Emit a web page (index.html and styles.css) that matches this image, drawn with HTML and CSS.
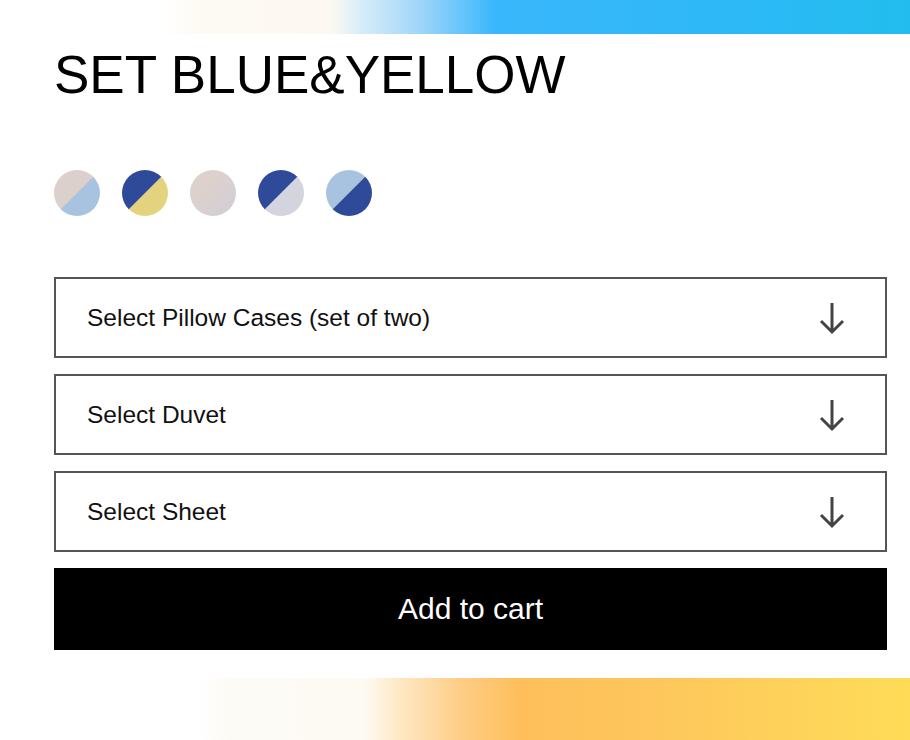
FILE: index.html
```html
<!DOCTYPE html>
<html lang="en">
<head>
<meta charset="utf-8">
<title>Set Blue&amp;Yellow</title>
<link rel="stylesheet" href="styles.css">
</head>
<body>
<div class="band band-top"></div>
<main class="product">
  <h1 class="title">SET BLUE&amp;YELLOW</h1>
  <div class="swatches">
    <span class="swatch sw1"></span>
    <span class="swatch sw2"></span>
    <span class="swatch sw3"></span>
    <span class="swatch sw4"></span>
    <span class="swatch sw5"></span>
  </div>
  <div class="selects">
    <div class="select"><span>Select Pillow Cases (set of two)</span>
      <svg class="arrow" viewBox="0 0 28 34" width="28" height="34"><path d="M14 2V31M3 20L14 31L25 20" fill="none" stroke="#444" stroke-width="3"/></svg>
    </div>
    <div class="select"><span>Select Duvet</span>
      <svg class="arrow" viewBox="0 0 28 34" width="28" height="34"><path d="M14 2V31M3 20L14 31L25 20" fill="none" stroke="#444" stroke-width="3"/></svg>
    </div>
    <div class="select"><span>Select Sheet</span>
      <svg class="arrow" viewBox="0 0 28 34" width="28" height="34"><path d="M14 2V31M3 20L14 31L25 20" fill="none" stroke="#444" stroke-width="3"/></svg>
    </div>
    <button class="cart">Add to cart</button>
  </div>
</main>
<div class="band band-bottom"></div>
</body>
</html>
```
FILE: styles.css
```css
html, body {
  margin: 0;
  padding: 0;
  background: #fff;
}
body {
  font-family: "Liberation Sans", Arial, sans-serif;
  color: #000;
  width: 910px;
  height: 740px;
  overflow: hidden;
  display: flex;
  flex-direction: column;
}
.band-top {
  height: 34px;
  flex: none;
  background: linear-gradient(to right, #fff 0, #fff 160px, #fdfaf3 200px, #fdf9f2 330px, #d9edf9 360px, #9fd5fa 420px, #3ab7fc 495px, #2fb8f8 700px, #22bdee 100%);
}
.product {
  padding: 14px 23px 0 54px;
  flex: 1;
}
.title {
  margin: 0;
  font-size: 53px;
  line-height: 54px;
  font-weight: 400;
  letter-spacing: 0;
}
.swatches {
  display: flex;
  gap: 22px;
  margin-top: 68px;
}
.swatch {
  width: 46px;
  height: 46px;
  border-radius: 50%;
}
.sw1 { background: linear-gradient(135deg, #dbd0cc 49%, #a8c3df 51%); }
.sw2 { background: linear-gradient(135deg, #2e4a98 49%, #e3d37f 51%); }
.sw3 { background: linear-gradient(135deg, #ddd1cd 35%, #d0cdd8 100%); }
.sw4 { background: linear-gradient(135deg, #2e4a98 49%, #d3d4de 51%); }
.sw5 { background: linear-gradient(135deg, #a8c3df 49%, #2e4a98 51%); }
.selects {
  display: flex;
  flex-direction: column;
  gap: 16px;
  margin-top: 61px;
}
.select {
  height: 77px;
  border: 2px solid #555;
  display: flex;
  align-items: center;
  justify-content: space-between;
  padding: 0 39px 0 31px;
  font-size: 24.5px;
  color: #111;
}
.arrow {
  display: block;
}
.cart {
  height: 82px;
  border: 0;
  background: #000;
  color: #fff;
  font-family: "Liberation Sans", Arial, sans-serif;
  font-size: 30px;
  padding: 0;
  cursor: pointer;
}
.band-bottom {
  height: 62px;
  flex: none;
  background: linear-gradient(to right, #fff 0, #fff 200px, #fdfbf6 230px, #fdfaf3 365px, #fde8c4 400px, #fecd86 460px, #febf5b 520px, #fec65c 650px, #fed35a 800px, #ffdb58 100%);
}
```
